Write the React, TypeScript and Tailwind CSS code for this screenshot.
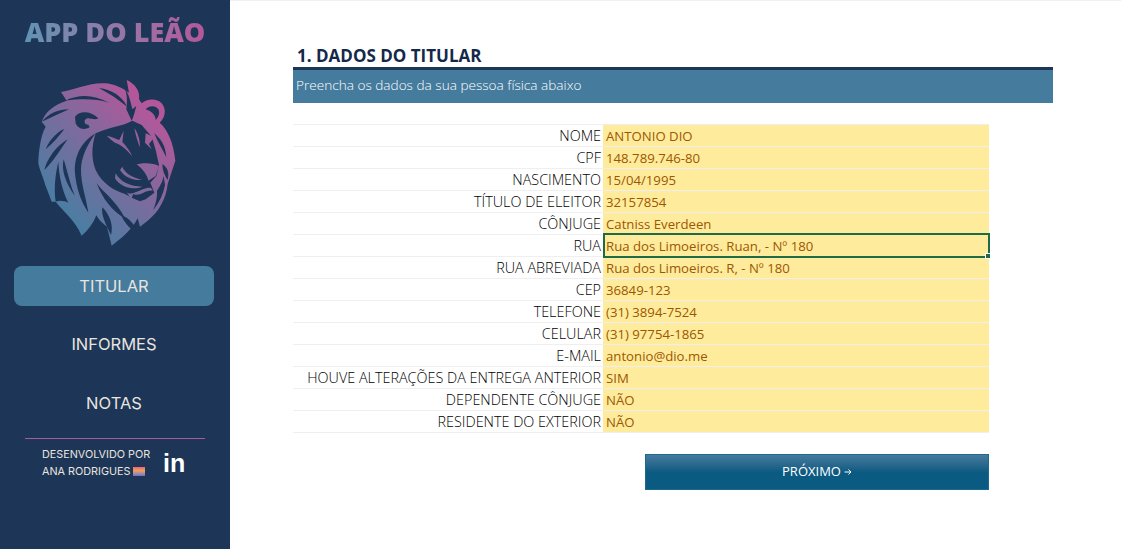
const rows: [string, string][] = [
  ["NOME", "ANTONIO DIO"],
  ["CPF", "148.789.746-80"],
  ["NASCIMENTO", "15/04/1995"],
  ["TÍTULO DE ELEITOR", "32157854"],
  ["CÔNJUGE", "Catniss Everdeen"],
  ["RUA", "Rua dos Limoeiros. Ruan, - Nº 180"],
  ["RUA ABREVIADA", "Rua dos Limoeiros. R, - Nº 180"],
  ["CEP", "36849-123"],
  ["TELEFONE", "(31) 3894-7524"],
  ["CELULAR", "(31) 97754-1865"],
  ["E-MAIL", "antonio@dio.me"],
  ["HOUVE ALTERAÇÕES DA ENTREGA ANTERIOR", "SIM"],
  ["DEPENDENTE CÔNJUGE", "NÃO"],
  ["RESIDENTE DO EXTERIOR", "NÃO"],
];

function Lion() {
  const bg = "#1d3557";
  return (
    <svg width="165" height="185" viewBox="0 0 495 555" className="block">
      <defs>
        <linearGradient id="lg" gradientUnits="userSpaceOnUse" x1="90" y1="430" x2="390" y2="130">
          <stop offset="0" stopColor="#457fa3" />
          <stop offset="0.55" stopColor="#7f6a9d" />
          <stop offset="1" stopColor="#b4579a" />
        </linearGradient>
      </defs>
      <path
        fill="url(#lg)"
        d="M305,30 C330,42 346,62 342,88 L350,100 C365,86 395,84 410,100 C426,118 420,145 404,158 C428,178 446,220 451,272 L428,342 C424,385 402,425 368,452 L345,470 L338,445 C320,480 290,505 260,527 L246,470 C232,460 222,450 214,436 C205,460 190,480 170,497 C150,450 120,430 92,395 L80,395 C68,360 60,345 58,335 C50,310 40,290 40,275 C42,235 48,195 62,170 L50,155 C62,125 85,105 125,92 L108,66 C150,58 200,36 240,40 C265,42 290,52 312,68 Z"
      />
      {/* right ear */}
      <path fill={bg} d="M362,118 C372,106 392,106 400,118 C406,130 400,142 392,150 C392,135 378,122 362,118 Z" />
      {/* crest cuts */}
      <path fill={bg} d="M222,54 C258,58 292,78 306,110 C280,88 252,70 222,54 Z" />
      <path fill={bg} d="M298,52 C312,72 318,100 322,118 L334,108 C328,132 324,145 320,152 L304,118 C308,95 306,70 298,52 Z" />
      <path fill={bg} d="M120,92 C165,72 205,74 252,98 C212,86 170,86 120,92 Z" />
      {/* left ear */}
      <path fill={bg} d="M150,140 C165,122 195,122 220,145 C208,152 195,142 184,146 C175,150 178,165 190,164 L194,172 C175,182 158,175 152,160 Z" />
      {/* mane slashes left */}
      <path fill={bg} d="M50,155 C72,130 100,118 132,118 C105,130 80,142 50,155 Z" />
      <path fill={bg} d="M62,238 C75,205 105,180 118,178 C100,200 85,220 62,238 Z" />
      <path fill={bg} d="M58,300 C68,262 95,228 128,208 C102,245 85,275 58,300 Z" />
      <path fill={bg} d="M92,395 C86,350 92,310 100,275 C102,320 112,362 130,398 C118,393 105,390 92,395 Z" />
      <path fill={bg} d="M150,378 C122,340 108,300 116,268 C128,305 135,345 150,378 Z" />
      {/* big dark crescent */}
      <path fill={bg} d="M212,190 C168,215 146,262 150,310 C154,355 168,395 190,428 C184,385 168,345 168,300 C168,262 188,222 212,190 Z" />
      {/* face */}
      <path fill={bg} d="M212,190 C248,172 290,170 322,152 L350,165 L380,200 L392,240 L402,285 L394,318 L376,338 L388,368 L362,388 L345,394 L322,384 L300,372 C268,362 232,342 212,300 C200,270 198,232 212,190 Z" />
      <path fill="url(#lg)" d="M192,236 C190,270 198,310 222,342 C240,362 270,375 300,385 C262,385 222,370 200,330 C186,300 184,262 192,236 Z" />
      <path fill={bg} d="M215,340 C240,372 275,395 300,445 C262,425 232,385 215,340 Z" />
      {/* face details */}
      <path fill="url(#lg)" d="M245,197 C262,200 275,208 283,210 L296,182 L292,216 C304,228 316,245 322,260 C308,240 285,222 270,218 C262,212 252,204 245,197 Z" />
      <path fill="url(#lg)" d="M328,175 C340,190 346,215 344,232 C338,215 332,195 328,175 Z" />
      <path fill="url(#lg)" d="M362,190 L388,202 L372,222 L380,238 L360,218 Z" />
      <path fill="url(#lg)" d="M335,283 C355,278 385,278 402,288 L392,318 L370,332 C368,318 355,298 335,283 Z" />
      <path fill="url(#lg)" d="M292,290 C300,310 322,322 352,330 C325,332 298,322 285,300 Z" />
      <path fill="url(#lg)" d="M272,310 C285,335 315,350 352,350 C320,362 285,350 270,325 Z" />
      <path fill="url(#lg)" d="M302,362 C310,378 330,368 348,360 C358,356 368,352 378,354 L384,362 C360,358 345,382 325,372 L318,388 L310,374 Z" />
      {/* right mane */}
      <path fill={bg} d="M388,190 C405,205 422,225 424,262 C412,238 398,215 388,190 Z" />
      <path fill={bg} d="M412,282 C426,292 434,305 428,330 C418,315 412,300 412,282 Z" />
      <path fill={bg} d="M396,362 C408,345 414,330 416,318 L420,345 C415,370 405,395 385,420 C392,400 398,380 396,362 Z" />
      <path fill={bg} d="M288,435 C315,445 330,465 336,488 C315,478 298,458 288,435 Z" />
      <path fill={bg} d="M232,412 C228,435 240,458 258,495 C266,470 256,435 232,412 Z" />
    </svg>
  );
}

function Sidebar() {
  return (
    <aside className="w-[230px] h-full shrink-0 bg-[#1d3557] flex flex-col items-center font-['Inter',sans-serif]">
      <h1 className="mt-[14px] h-[36px] leading-[36px] text-[27px] font-black text-transparent bg-clip-text bg-gradient-to-r from-[#5f93b3] to-[#b4579a] font-['Open_Sans',sans-serif] whitespace-nowrap">
        APP DO LEÃO
      </h1>
      <div className="mt-[20px] self-start ml-[25px]">
        <Lion />
      </div>
      <nav className="mt-[11px] self-start ml-[14px] w-[200px] flex flex-col items-center text-[16.5px] text-[#e8e4df]">
        <div className="w-full h-[40px] pt-[1px] rounded-lg bg-[#457b9d] flex items-center justify-center">TITULAR</div>
        <div className="mt-[19px] h-[38px] flex items-center justify-center">INFORMES</div>
        <div className="mt-[21px] h-[38px] flex items-center justify-center">NOTAS</div>
      </nav>
      <div className="mt-[16px] w-[180px] h-px bg-[#a65d98]" />
      <div className="mt-[7px] w-[180px] flex items-center">
        <div className="ml-[17px] w-[123px] text-[10.8px] leading-[17px] text-[#e8e4df] whitespace-nowrap">
          <div>DESENVOLVIDO POR</div>
          <div className="flex items-center gap-[3px]">
            ANA RODRIGUES
            <span className="w-[12px] h-[9px] block bg-gradient-to-b from-[#f0607a] via-[#f0a050] via-40% to-[#6a6fd0]" />
          </div>
        </div>
        <span className="-ml-[2px] text-[25px] leading-[30px] font-bold text-white font-['Liberation_Sans',sans-serif]">in</span>
      </div>
    </aside>
  );
}

export default function App() {
  return (
    <div className="w-[1121px] h-[549px] flex bg-white overflow-hidden">
      <Sidebar />
      <main className="flex-1 border-t border-[#f0f0f0] pl-[63px] pt-[44px]">
        <h2 className="pl-[4px] h-[22px] leading-[22px] text-[17px] font-bold text-[#14294a] font-['Open_Sans',sans-serif]">
          1. DADOS DO TITULAR
        </h2>
        <div className="w-[760px] h-[36px] border-t-[3px] border-[#1d3557] bg-[#457b9d] pl-[3px] text-[13.6px] leading-[30px] text-white font-light font-['Open_Sans',sans-serif]">
          Preencha os dados da sua pessoa física abaixo
        </div>
        <div className="mt-[21px] w-[696px]">
          {rows.map(([label, value]) => (
            <div key={label} className="relative h-[22px] flex border-t border-[#efefef] font-['Open_Sans',sans-serif]">
              <div className="w-[310px] pr-[2px] text-right text-[14.4px] leading-[21px] font-light text-black whitespace-nowrap">
                {label}
              </div>
              <div className="flex-1 bg-[#ffeb9c] pl-[3px] text-[13.2px] leading-[22px] text-[#9c5700] whitespace-nowrap">
                {value}
              </div>
              {label === "RUA" && (
                <div className="absolute z-10 left-[310px] -top-[2px] w-[387px] h-[25px] border-2 border-[#1f6b45]">
                  <span className="absolute -right-[3px] -bottom-[3px] w-[6px] h-[6px] bg-[#1f6b45] border border-white" />
                </div>
              )}
            </div>
          ))}
          <div className="border-t border-[#efefef]" />
        </div>
        <div className="mt-[21px] w-[696px] flex justify-end">
          <button className="w-[344px] h-[36px] border border-[#1b6a8f] bg-gradient-to-b from-[#457b9d] to-[#0b5a82] to-50% text-white text-[13px] font-normal font-['Open_Sans',sans-serif] flex items-center justify-center gap-[3px]">
            PRÓXIMO
            <svg width="8" height="8" viewBox="0 0 8 8" fill="none" stroke="white" strokeWidth="1">
              <path d="M0.5 4H7M4.5 1.5L7 4L4.5 6.5" />
            </svg>
          </button>
        </div>
      </main>
    </div>
  );
}
